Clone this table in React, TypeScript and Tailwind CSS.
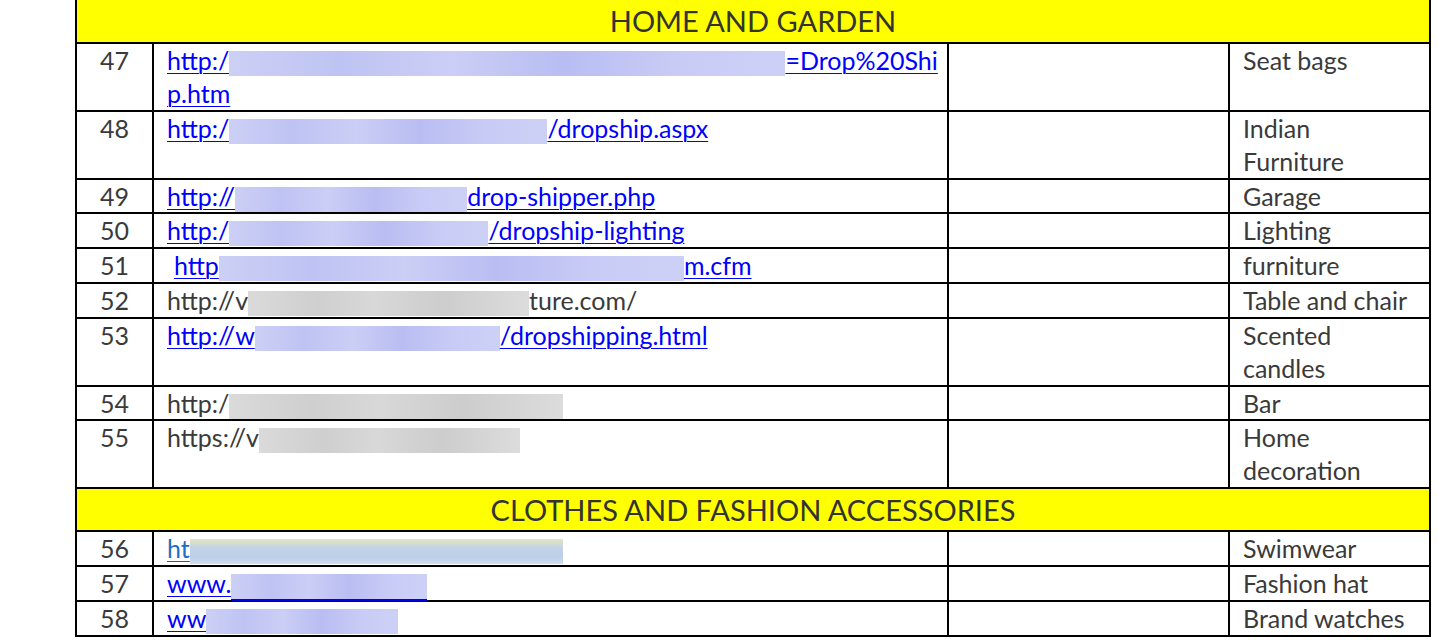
import type { ReactNode } from 'react'

// blurred-out part of an address, the way the scan shows it
function Blur({ w, tone = 'blue', line = false }: { w: number; tone?: 'blue' | 'gray' | 'sky'; line?: boolean }) {
  const bg =
    tone === 'gray'
      ? 'bg-[linear-gradient(90deg,#dadada,#cfcfcf_25%,#d8d8d8_45%,#cdcdcd_70%,#dcdcdc)]'
      : tone === 'sky'
        ? 'bg-[linear-gradient(180deg,#e6e4bd,#c2d3e6_35%,#bccfe8_70%,#cfdcec)]'
        : 'bg-[linear-gradient(90deg,#ccd0f5,#bfc3f3_20%,#cbcef5_40%,#b9bdf2_60%,#c8cbf5_80%,#cdd0f6)]'
  return (
    <span
      className={`mt-[7px] inline-block h-[25px] align-top ${bg} ${line ? 'shadow-[0_2px_0_#0000ee]' : ''}`}
      style={{ width: w }}
    />
  )
}

function Link({ children, className = '' }: { children: ReactNode; className?: string }) {
  return <span className={`text-[#0000ff] underline decoration-1 underline-offset-[3px] ${className}`}>{children}</span>
}

type Row = { n: number; url: ReactNode; cat: ReactNode; tight?: boolean }

const home: Row[] = [
  {
    n: 47,
    url: (
      <>
        <Link>http:/</Link>
        <Blur w={556} />
        <Link>=Drop%20Shi</Link>
        <br />
        <Link>p.htm</Link>
      </>
    ),
    cat: 'Seat bags',
  },
  {
    n: 48,
    url: (
      <>
        <Link>http:/</Link>
        <Blur w={318} />
        <Link>/dropship.aspx</Link>
      </>
    ),
    cat: (
      <>
        Indian
        <br />
        Furniture
      </>
    ),
  },
  {
    n: 49,
    tight: true,
    url: (
      <>
        <Link>http://</Link>
        <Blur w={232} />
        <Link>drop-shipper.php</Link>
      </>
    ),
    cat: 'Garage',
  },
  {
    n: 50,
    url: (
      <>
        <Link>http:/</Link>
        <Blur w={259} />
        <Link>/dropship-lighting</Link>
      </>
    ),
    cat: 'Lighting',
  },
  {
    n: 51,
    url: (
      <>
        <Link className="ml-[7px]">http</Link>
        <Blur w={465} />
        <Link>m.cfm</Link>
      </>
    ),
    cat: 'furniture',
  },
  {
    n: 52,
    url: (
      <>
        http://v
        <Blur w={281} tone="gray" />
        ture.com/
      </>
    ),
    cat: 'Table and chair',
  },
  {
    n: 53,
    url: (
      <>
        <Link>http://w</Link>
        <Blur w={245} />
        <Link>/dropshipping.html</Link>
      </>
    ),
    cat: (
      <>
        Scented
        <br />
        candles
      </>
    ),
  },
  {
    n: 54,
    tight: true,
    url: (
      <>
        http:/
        <Blur w={334} tone="gray" />
      </>
    ),
    cat: 'Bar',
  },
  {
    n: 55,
    url: (
      <>
        https://v
        <Blur w={261} tone="gray" />
      </>
    ),
    cat: (
      <>
        Home
        <br />
        decoration
      </>
    ),
  },
]

const clothes: Row[] = [
  {
    n: 56,
    url: (
      <>
        <span className="text-[#1f6fc5] underline decoration-[#0563c1] decoration-1 underline-offset-[3px]">ht</span>
        <Blur w={373} tone="sky" />
      </>
    ),
    cat: 'Swimwear',
  },
  {
    n: 57,
    url: (
      <>
        <Link>www.</Link>
        <Blur w={196} line />
      </>
    ),
    cat: 'Fashion hat',
  },
  {
    n: 58,
    url: (
      <>
        <Link>ww</Link>
        <Blur w={192} />
      </>
    ),
    cat: 'Brand watches',
  },
]

const cell = 'border-r-2 border-b-2 border-black align-top p-0'

function Section({ title, rows, tall }: { title: string; rows: Row[]; tall?: boolean }) {
  return (
    <>
      <tr>
        <td
          colSpan={4}
          className={`border-r-2 border-b-2 border-black bg-[#ffff00] p-0 text-center align-middle text-[29px] leading-[40px] text-[#333333] ${tall ? 'h-[44px]' : 'h-[43px]'}`}
        >
          {title}
        </td>
      </tr>
      {rows.map((r) => {
        const lh = r.tight ? 'leading-[32px]' : 'leading-[33px]'
        return (
          <tr key={r.n}>
            <td className={`${cell} ${lh} text-center`}>{r.n}</td>
            <td className={`${cell} ${lh} pl-[13px] whitespace-nowrap`}>{r.url}</td>
            <td className={`${cell} ${lh}`}></td>
            <td className={`${cell} ${lh} pl-[13px]`}>{r.cat}</td>
          </tr>
        )
      })}
    </>
  )
}

export default function App() {
  return (
    <div className="h-[640px] w-[1438px] overflow-hidden bg-white font-['Lato','Liberation_Sans',sans-serif] text-[25px] text-[#3a3a3a]">
      <table className="ml-[75px] mt-[-2px] w-[1356px] table-fixed border-separate border-spacing-0 border-l-2 border-t-2 border-black">
        <colgroup>
          <col className="w-[77px]" />
          <col className="w-[795px]" />
          <col className="w-[281px]" />
          <col className="w-[201px]" />
        </colgroup>
        <tbody>
          <Section title="HOME AND GARDEN" rows={home} tall />
          <Section title="CLOTHES AND FASHION ACCESSORIES" rows={clothes} />
        </tbody>
      </table>
    </div>
  )
}
